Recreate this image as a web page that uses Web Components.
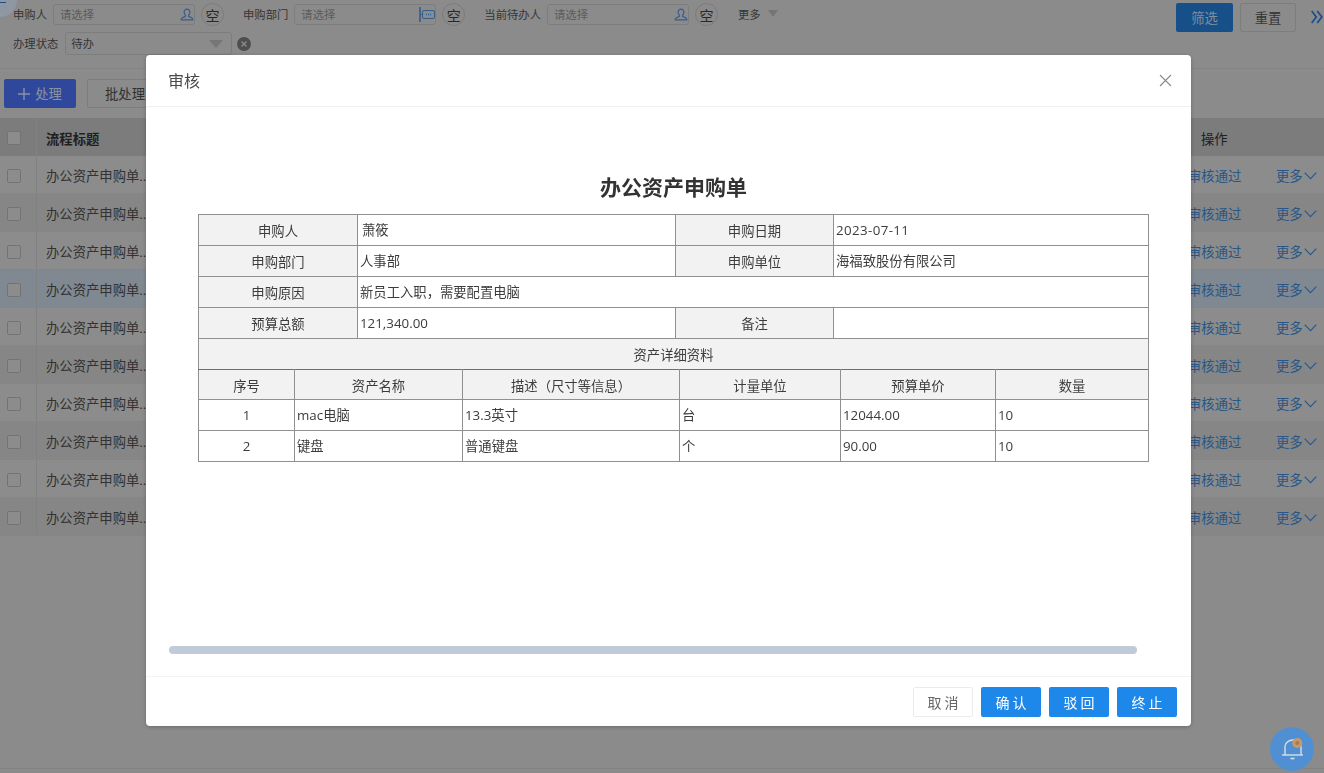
<!DOCTYPE html>
<html lang="zh-CN">
<head>
<meta charset="utf-8">
<title>审核</title>
<style>
  html, body { margin: 0; height: 100%; }
  body {
    width: 1324px;
    height: 773px;
    overflow: hidden;
    background: #c8c8c8;
    font-family: "Open Sans", "Noto Sans CJK SC", sans-serif;
    color: #4a4a4a;
  }
</style>
</head>
<body>
<process-page></process-page>
<audit-modal></audit-modal>
<notify-bell></notify-bell>

<script>
const FONT = `"Open Sans", "Noto Sans CJK SC", sans-serif`;

const ICONS = {
  user: `<svg width="14" height="14" viewBox="0 0 15 15" fill="none" stroke="#4a86c8" stroke-width="1.3"><path d="M7.500 1.200c-2 0-3.100 1.500-3.100 3.300 0 1.300.6 2.400 1.400 3.100v1.300c-.6.7-2.600 1-3.600 1.700-.6.4-.9 1.100-.9 2.100h12.400c0-1-.3-1.700-.9-2.100-1-.7-3-1-3.600-1.700V7.600c.8-.7 1.400-1.800 1.400-3.100 0-1.800-1.100-3.300-3.100-3.300z"/></svg>`,
  dept: `<svg width="16" height="15" viewBox="0 0 16 15" fill="none" stroke="#4a86c8"><path d="M1 0v15" stroke-width="1.6"/><path d="M1 7.500h2"/><rect x="3.500" y="3.500" width="12" height="8" rx="1.500"/><path d="M7 7.500h1M9 7.500h1M11 7.500h1" stroke-width="1.400"/></svg>`
};

class FilterField extends HTMLElement {
  connectedCallback() {
    const label = this.getAttribute('label');
    const icon = ICONS[this.getAttribute('icon')] || '';
    this.attachShadow({ mode: 'open' });
    this.shadowRoot.innerHTML = `
      <style>
        :host { display: flex; align-items: center; font-size: 11.33px; color: #4d4d4d; }
        .label { margin-right: 6px; padding-bottom: 2px; white-space: nowrap; }
        .input {
          box-sizing: border-box;
          width: 142px;
          height: 21px;
          display: flex;
          align-items: center;
          justify-content: space-between;
          padding: 0 0 0 6px;
          border: 1px solid #b4b4b4;
          border-radius: 3px;
          color: #858585;
        }
        .text { padding-bottom: 2px; }
        .icon { display: flex; }
        .clear {
          box-sizing: border-box;
          width: 23px;
          height: 23px;
          margin-left: 6px;
          border: 1px solid #b0b0b0;
          border-radius: 50%;
          display: flex;
          align-items: center;
          justify-content: center;
          font-size: 14px;
          color: #3a3a3a;
        }
      </style>
      <span class="label">${label}</span>
      <div class="input"><span class="text">请选择</span><span class="icon">${icon}</span></div>
      <div class="clear">空</div>
    `;
  }
}
customElements.define('filter-field', FilterField);

class FilterBar extends HTMLElement {
  constructor() {
    super();
    this.attachShadow({ mode: 'open' });
    this.shadowRoot.innerHTML = `
      <style>
        :host {
          display: flex;
          justify-content: space-between;
          height: 65px;
          padding: 3px 1px 0 13px;
          border-bottom: 1px solid #bdbdbd;
          font-size: 11.33px;
          color: #4d4d4d;
        }
        .rows { display: flex; flex-direction: column; gap: 6px; }
        .row { display: flex; align-items: center; }
        .row filter-field + filter-field { margin-left: 19px; }
        .more { display: flex; align-items: center; margin-left: 20px; gap: 7px; margin-top: -2px; }
        .tri { width: 0; height: 0; border: 5px solid transparent; border-top: 7px solid #a8a8a8; border-bottom: 0; }
        .label { padding-bottom: 2px; }
        .select {
          box-sizing: border-box;
          width: 167px;
          height: 23px;
          margin-left: 7px;
          padding: 0 5px;
          border: 1px solid #b4b4b4;
          border-radius: 3px;
          display: flex;
          align-items: center;
          justify-content: space-between;
        }
        .select .tri { border-width: 8px 7px 0; border-top-color: #aaa; margin-right: 3px; }
        .x { width: 14px; height: 14px; margin-left: 5px; display: flex; }
        .actions { display: flex; align-items: flex-start; }
        .btn {
          box-sizing: border-box;
          height: 29px;
          border-radius: 2px;
          display: flex;
          align-items: center;
          justify-content: center;
          font-size: 13.33px;
        }
        .primary { width: 57px; background: #2272c4; color: #bccbdc; }
        .plain { width: 56px; border: 1px solid #b4b4b4; color: #4d4d4d; margin-left: 7px; }
        .chev { margin: 7px 0 0 15px; display: flex; }
      </style>
      <div class="rows">
        <div class="row">
          <filter-field label="申购人" icon="user"></filter-field>
          <filter-field label="申购部门" icon="dept"></filter-field>
          <filter-field label="当前待办人" icon="user"></filter-field>
          <div class="more">更多<span class="tri"></span></div>
        </div>
        <div class="row">
          <span class="label">办理状态</span>
          <div class="select"><span class="label">待办</span><span class="tri"></span></div>
          <span class="x"><svg width="14" height="14" viewBox="0 0 14 14"><circle cx="7" cy="7" r="7" fill="#707070"/><path d="M4.500 4.500l5 5M9.500 4.500l-5 5" stroke="#c8c8c8" stroke-width="1.300"/></svg></span>
        </div>
      </div>
      <div class="actions">
        <div class="btn primary">筛选</div>
        <div class="btn plain">重置</div>
        <span class="chev"><svg width="12" height="14" viewBox="0 0 12 14" fill="none" stroke="#2a70c8" stroke-width="1.800"><path d="M.7 1l4.600 6-4.600 6M6.200 1l4.600 6-4.600 6"/></svg></span>
      </div>
    `;
  }
}
customElements.define('filter-bar', FilterBar);

class ProcessTable extends HTMLElement {
  constructor() {
    super();
    this.attachShadow({ mode: 'open' });
    const rows = Array.from({ length: 10 }, (_, i) => `
      <div class="row ${i === 3 ? 'active' : i % 2 ? 'even' : ''}">
        <div class="check"><span class="box"></span></div>
        <div class="title">办公资产申购单...</div>
        <div class="spacer"></div>
        <div class="ops">
          <span class="link pass">审核通过</span>
          <span class="link more">更多<svg width="13" height="8" viewBox="0 0 13 8" fill="none" stroke="#3a7cc0" stroke-width="1.100"><path d="M.7.7l5.800 6 5.800-6"/></svg></span>
        </div>
      </div>`).join('');
    this.shadowRoot.innerHTML = `
      <style>
        :host { display: block; font-size: 13.33px; color: #484848; }
        .row { display: flex; height: 38px; align-items: stretch; box-sizing: border-box; background: #c9c9c9; border-bottom: 1px solid #c0c0c0; }
        .row.even { background: #c1c1c1; }
        .row.active { background: #b8c4d2; }
        .row.head { background: #b2b2b2; border-bottom: 0; color: #2e2e2e; }
        .check { width: 37px; display: flex; align-items: center; justify-content: center; box-sizing: border-box; padding: 2px 8px 0 0; border-right: 1px solid #b9b9b9; }
        .box { box-sizing: border-box; width: 14px; height: 14px; border: 1px solid #a5a5a5; border-radius: 2px; background: #c9c9c9; }
        .title { width: 120px; padding: 2px 0 0 9px; display: flex; align-items: center; white-space: nowrap; }
        .head .title { font-weight: 700; }
        .spacer { flex: 1; }
        .ops { width: 136px; display: flex; align-items: center; padding-top: 2px; box-sizing: border-box; }
        .head .ops { padding-left: 13px; }
        .link { color: #3a7cc0; white-space: nowrap; }
        .pass { width: 88px; }
        .more { display: inline-flex; align-items: center; gap: 1px; }
      </style>
      <div class="row head">
        <div class="check"><span class="box"></span></div>
        <div class="title">流程标题</div>
        <div class="spacer"></div>
        <div class="ops">操作</div>
      </div>
      ${rows}
    `;
  }
}
customElements.define('process-table', ProcessTable);

class ProcessPage extends HTMLElement {
  constructor() {
    super();
    this.attachShadow({ mode: 'open' });
    this.shadowRoot.innerHTML = `
      <style>
        :host { display: flex; flex-direction: column; height: 773px; box-sizing: border-box; border-bottom: 4px solid #c8c8c8; position: relative; overflow: hidden; }
        .corner { position: absolute; left: -17px; top: -17px; width: 34px; height: 34px; border-radius: 50%; background: #ccd8e8; }
        .corner::after { content: ''; position: absolute; left: 17px; top: 19px; width: 6px; height: 1px; background: #2a70c8; }
        .bar { position: relative; }
        .toolbar { display: flex; gap: 11px; padding: 10px 4px; }
        .btn { box-sizing: border-box; height: 29px; border-radius: 2px; display: flex; align-items: center; justify-content: center; font-size: 13.33px; flex: none; }
        .add { width: 72px; background: #4568e0; color: #c6cfe6; gap: 5px; }
        .batch { padding: 0 17px; border: 1px solid #b4b4b4; color: #474747; }
        .foot { margin-top: auto; border-top: 1px solid #bcbcbc; }
      </style>
      <div class="corner"></div>
      <filter-bar class="bar"></filter-bar>
      <div class="toolbar">
        <div class="btn add"><svg width="12" height="12" viewBox="0 0 12 12" stroke="#c6cfe6" stroke-width="1.400"><path d="M6 0v12M0 6h12"/></svg>处理</div>
        <div class="btn batch">批处理</div>
      </div>
      <process-table></process-table>
      <div class="foot"></div>
    `;
  }
}
customElements.define('process-page', ProcessPage);

class AssetForm extends HTMLElement {
  constructor() {
    super();
    this.attachShadow({ mode: 'open' });
    this.shadowRoot.innerHTML = `
      <style>
        :host { display: block; width: 951px; margin-left: 52px; font-size: 13.33px; color: #3c3c3c; }
        h2 { margin: 0 0 12px; height: 30px; line-height: 30px; text-align: center; font-size: 21px; font-weight: 700; color: #333; }
        table { border-collapse: collapse; table-layout: fixed; width: 951px; }
        td { border: 1px solid #909090; padding: 0 0 2px 2px; text-align: left; box-sizing: border-box; white-space: nowrap; }
        .main td { height: 31px; }
        .sub { margin-top: -1px; }
        .sub td { height: 31px; }
        .sub tr:first-child td { height: 30px; border-top: 1px solid #707070; }
        td.label { background: #f2f2f2; text-align: center; padding: 1px 0 0; }
        td.center { text-align: center; padding: 0 0 1px; }
        td.name { padding-left: 4px; }
        td.num { padding-bottom: 1px; }
        td.date { padding-bottom: 0; letter-spacing: .38px; }
      </style>
      <h2>办公资产申购单</h2>
      <table class="main">
        <colgroup><col style="width:159px"><col style="width:318px"><col style="width:158px"><col></colgroup>
        <tr><td class="label">申购人</td><td class="name">萧筱</td><td class="label">申购日期</td><td class="date">2023-07-11</td></tr>
        <tr><td class="label">申购部门</td><td>人事部</td><td class="label">申购单位</td><td>海福致股份有限公司</td></tr>
        <tr><td class="label">申购原因</td><td colspan="3">新员工入职，需要配置电脑</td></tr>
        <tr><td class="label">预算总额</td><td class="num">121,340.00</td><td class="label">备注</td><td></td></tr>
        <tr><td class="label" colspan="4">资产详细资料</td></tr>
      </table>
      <table class="sub">
        <colgroup><col style="width:96px"><col style="width:168px"><col style="width:217px"><col style="width:161px"><col style="width:155px"><col></colgroup>
        <tr><td class="label">序号</td><td class="label">资产名称</td><td class="label">描述（尺寸等信息）</td><td class="label">计量单位</td><td class="label">预算单价</td><td class="label">数量</td></tr>
        <tr><td class="center">1</td><td>mac电脑</td><td>13.3英寸</td><td>台</td><td class="num">12044.00</td><td class="num">10</td></tr>
        <tr><td class="center">2</td><td>键盘</td><td>普通键盘</td><td>个</td><td class="num">90.00</td><td class="num">10</td></tr>
      </table>
    `;
  }
}
customElements.define('asset-form', AssetForm);

class AuditModal extends HTMLElement {
  constructor() {
    super();
    this.attachShadow({ mode: 'open' });
    this.shadowRoot.innerHTML = `
      <style>
        :host { position: fixed; inset: 0; background: rgba(0, 0, 0, .3); display: block; font-family: ${FONT}; }
        .dialog {
          position: absolute;
          left: 146px;
          top: 55px;
          width: 1045px;
          height: 671px;
          background: #fff;
          border-radius: 4px;
          box-shadow: 0 1px 4px rgba(0, 0, 0, .25);
          display: flex;
          flex-direction: column;
        }
        header {
          height: 52px;
          flex: none;
          box-sizing: border-box;
          padding: 0 19px 2px 22px;
          border-bottom: 1px solid #f0f0f0;
          display: flex;
          align-items: center;
          justify-content: space-between;
          font-size: 16px;
          color: #4a4a4a;
        }
        header svg { margin-top: 2px; }
        .body { flex: 1; display: flex; flex-direction: column; padding: 65px 0 22px; box-sizing: border-box; min-height: 0; }
        .scroll { margin: auto 0 0 23px; width: 968px; height: 8px; border-radius: 4px; background: #c0cad8; flex: none; }
        footer {
          height: 50px;
          flex: none;
          box-sizing: border-box;
          border-top: 1px solid #f3f3f3;
          padding: 10px 14px 0 0;
          display: flex;
          justify-content: flex-end;
          gap: 8px;
        }
        .btn {
          box-sizing: border-box;
          width: 60px;
          height: 30px;
          border-radius: 2px;
          display: flex;
          align-items: center;
          justify-content: center;
          font-size: 14px;
          letter-spacing: 3px;
          text-indent: 3px;
          background: #1e88ea;
          color: #fff;
        }
        .btn.cancel { background: #fff; color: #666; border: 1px solid #ebebeb; }
      </style>
      <div class="dialog">
        <header>
          <span>审核</span>
          <svg width="13" height="13" viewBox="0 0 13 13" stroke="#8c8c8c" stroke-width="1.100"><path d="M1 1l11 11M12 1L1 12"/></svg>
        </header>
        <div class="body">
          <asset-form></asset-form>
          <div class="scroll"></div>
        </div>
        <footer>
          <div class="btn cancel">取消</div>
          <div class="btn">确认</div>
          <div class="btn">驳回</div>
          <div class="btn">终止</div>
        </footer>
      </div>
    `;
  }
}
customElements.define('audit-modal', AuditModal);

class NotifyBell extends HTMLElement {
  constructor() {
    super();
    this.attachShadow({ mode: 'open' });
    this.shadowRoot.innerHTML = `
      <style>
        :host { position: fixed; left: 1270px; top: 727px; width: 44px; height: 44px; border-radius: 50%; background: #5090d2; display: flex; align-items: center; justify-content: center; }
      </style>
      <svg width="28" height="28" viewBox="0 0 28 28" fill="none" stroke="#d8dee6" stroke-width="1.400">
        <path d="M4 20h21"/>
        <path d="M7 20v-8c0-4 3.500-7 8-7s8 3 8 7v8"/>
        <path d="M12.500 23.500h4" stroke-width="1.600"/>
        <circle cx="19.300" cy="8" r="5" fill="#c49a6c" stroke="none"/>
        <circle cx="19.300" cy="8" r="2" fill="#a8794e" stroke="none"/>
      </svg>
    `;
  }
}
customElements.define('notify-bell', NotifyBell);
</script>
</body>
</html>
